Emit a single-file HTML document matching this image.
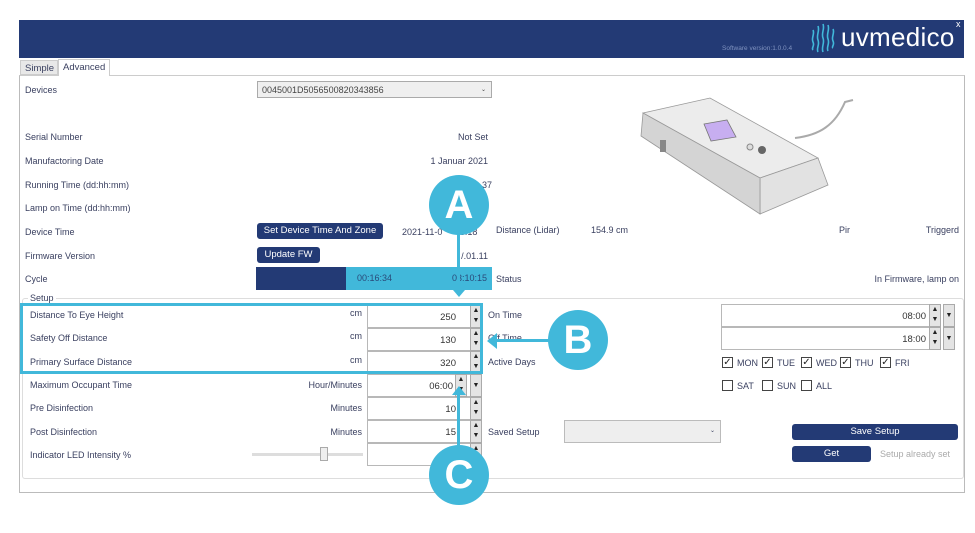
<!DOCTYPE html>
<html><head><meta charset="utf-8"><style>
*{margin:0;padding:0;box-sizing:border-box}
body{width:975px;height:533px;background:#fff;position:relative;overflow:hidden;font-family:"Liberation Sans",sans-serif;font-size:9px;color:#3a4060}
.a{position:absolute;white-space:nowrap}
.r{text-align:right}
.btn{position:absolute;background:#233a75;color:#fff;border-radius:3px;text-align:center;font-size:9.5px}
.inp{position:absolute;background:#fff;border:1px solid #b8b8b8;text-align:right;padding-right:14px;font-size:9.5px;color:#333}
.sp{position:absolute;width:12px;background:#e4e4e4;border:1px solid #aaa;font-size:7px;line-height:10px;text-align:center;color:#222}
.cb{position:absolute;width:11px;height:11px;border:1px solid #444;background:#fff;font-size:10px;line-height:9px;text-align:center;color:#222}
.circ{position:absolute;width:60px;height:60px;border-radius:50%;background:#41b8da;color:#fff;font-size:40px;font-weight:bold;text-align:center;line-height:60px}
</style></head><body>
<div class="a" style="left:19px;top:20px;width:945px;height:38px;background:#233a75"></div>
<div class="a" style="left:722px;top:45px;font-size:6.5px;color:#7f92bf">Software version:1.0.0.4</div>
<svg class="a" style="left:809px;top:22px" width="30" height="32" viewBox="0 0 30 32"><g fill="none" stroke="#41b8da" stroke-width="1.6"><path d="M4 8c2 4-2 8 0 12s-2 6 0 8"/><path d="M9 4c2 5-2 9 0 14s-2 8 0 12"/><path d="M14 2c2 5-2 9 0 14s-2 9 0 14"/><path d="M19 3c2 5-2 9 0 14s-2 8 0 12"/><path d="M24 7c2 4-2 8 0 12s-2 6 0 7"/></g></svg>
<div class="a" style="left:841px;top:22px;font-size:26px;color:#fff;letter-spacing:0.3px">uvmedico</div>
<div class="a" style="left:956px;top:19px;font-size:9px;color:#fff">x</div>
<div class="a" style="left:20px;top:60px;width:38px;height:15px;background:#e8e8e8;border:1px solid #ccc;font-size:9.5px;padding:2px 4px">Simple</div>
<div class="a" style="left:58px;top:59px;width:52px;height:17px;background:#fff;border:1px solid #ccc;border-bottom:none;font-size:9.5px;padding:2px 4px">Advanced</div>
<div class="a" style="left:19px;top:75px;width:946px;height:418px;border:1px solid #bbb;border-top-color:#ccc"></div>
<div class="a" style="left:59px;top:75px;width:50px;height:2px;background:#fff"></div>
<div class="a" style="left:25px;top:85px">Devices</div>
<div class="a" style="left:257px;top:81px;width:235px;height:17px;border:1px solid #aaa;background:#efefef;padding:3px 4px;color:#444">0045001D5056500820343856<span style="position:absolute;right:5px;font-size:6px;top:4px">⌄</span></div>
<div class="a" style="left:25px;top:132px">Serial Number</div><div class="a r" style="right:487px;top:132px">Not Set</div>
<div class="a" style="left:25px;top:156px">Manufactoring Date</div><div class="a r" style="right:487px;top:156px">1 Januar 2021</div>
<div class="a" style="left:25px;top:180px">Running Time (dd:hh:mm)</div><div class="a" style="left:482px;top:180px">37</div>
<div class="a" style="left:25px;top:203px">Lamp on Time (dd:hh:mm)</div>
<div class="a" style="left:25px;top:227px">Device Time</div>
<div class="btn" style="left:257px;top:223px;width:126px;height:16px;line-height:16px">Set Device Time And Zone</div>
<div class="a" style="left:402px;top:227px">2021-11-0&nbsp;&nbsp;&nbsp;&nbsp;&nbsp;&nbsp;&nbsp;5:18</div>
<div class="a" style="left:496px;top:225px">Distance (Lidar)</div><div class="a" style="left:591px;top:225px">154.9 cm</div>
<div class="a" style="left:839px;top:225px">Pir</div><div class="a r" style="right:16px;top:225px">Triggerd</div>
<div class="a" style="left:25px;top:251px">Firmware Version</div>
<div class="btn" style="left:257px;top:247px;width:63px;height:16px;line-height:16px">Update FW</div>
<div class="a r" style="right:487px;top:251px">/.01.11</div>
<div class="a" style="left:25px;top:274px">Cycle</div>
<div class="a" style="left:256px;top:267px;width:90px;height:23px;background:#233a75"></div>
<div class="a" style="left:346px;top:267px;width:146px;height:23px;background:#41b8da"></div>
<div class="a" style="left:357px;top:273px;color:#2a4a7a">00:16:34</div><div class="a" style="left:452px;top:273px;color:#2a4a7a">03:10:15</div>
<div class="a" style="left:496px;top:274px">Status</div><div class="a r" style="right:16px;top:274px">In Firmware, lamp on</div>
<!-- device image -->
<svg class="a" style="left:0;top:0" width="975" height="533" viewBox="0 0 975 533">
<path d="M795 138 C820 135 835 125 845 102 L853 100" stroke="#aaa" stroke-width="2" fill="none"/>
<polygon points="643,113 710,98 818,158 760,178" fill="#ececec" stroke="#999" stroke-width="0.8"/>
<polygon points="760,178 818,158 828,185 760,214" fill="#e2e2e2" stroke="#999" stroke-width="0.8"/>
<polygon points="643,113 760,178 760,214 641,136" fill="#d4d4d4" stroke="#999" stroke-width="0.8"/>
<polygon points="704,124 727,120 736,137 711,141" fill="#c7aef0" stroke="#777" stroke-width="0.8"/>
<circle cx="750" cy="147" r="3" fill="#ddd" stroke="#888"/><circle cx="762" cy="150" r="4" fill="#666"/>
<rect x="660" y="140" width="6" height="12" fill="#888"/>
</svg>
<!-- setup -->
<div class="a" style="left:22px;top:298px;width:942px;height:181px;border:1px solid #ddd;border-radius:3px"></div>
<div class="a" style="left:28px;top:293px;background:#fff;padding:0 2px">Setup</div>
<div class="a" style="left:30px;top:310px">Distance To Eye Height</div><div class="a r" style="right:613px;top:308px">cm</div>
<div class="a" style="left:30px;top:333px">Safety Off Distance</div><div class="a r" style="right:613px;top:331px">cm</div>
<div class="a" style="left:30px;top:357px">Primary Surface Distance</div><div class="a r" style="right:613px;top:355px">cm</div>
<div class="a" style="left:30px;top:380px">Maximum Occupant Time</div><div class="a r" style="right:613px;top:380px">Hour/Minutes</div>
<div class="a" style="left:30px;top:403px">Pre Disinfection</div><div class="a r" style="right:613px;top:403px">Minutes</div>
<div class="a" style="left:30px;top:427px">Post Disinfection</div><div class="a r" style="right:613px;top:427px">Minutes</div>
<div class="a" style="left:30px;top:450px">Indicator LED Intensity %</div>
<div class="a" style="left:252px;top:453px;width:111px;height:3px;background:#ddd"></div>
<div class="a" style="left:320px;top:447px;width:8px;height:14px;background:#eee;border:1px solid #aaa"></div>
<div class="inp" style="left:367px;top:305px;width:104px;height:23px;line-height:23px">250</div><div class="sp" style="left:470px;top:305px;height:23px">▲<br>▼</div>
<div class="inp" style="left:367px;top:328px;width:104px;height:23px;line-height:23px">130</div><div class="sp" style="left:470px;top:328px;height:23px">▲<br>▼</div>
<div class="inp" style="left:367px;top:351px;width:104px;height:23px;line-height:23px">320</div><div class="sp" style="left:470px;top:351px;height:23px">▲<br>▼</div>
<div class="inp" style="left:367px;top:374px;width:104px;height:23px;line-height:23px;padding-right:17px">06:00</div><div class="sp" style="left:455px;top:374px;height:23px">▲<br>▼</div><div class="sp" style="left:470px;top:374px;height:23px;line-height:21px">▼</div>
<div class="inp" style="left:367px;top:397px;width:104px;height:23px;line-height:23px">10</div><div class="sp" style="left:470px;top:397px;height:23px">▲<br>▼</div>
<div class="inp" style="left:367px;top:420px;width:104px;height:23px;line-height:23px">15</div><div class="sp" style="left:470px;top:420px;height:23px">▲<br>▼</div>
<div class="inp" style="left:367px;top:443px;width:104px;height:23px"></div><div class="sp" style="left:470px;top:443px;height:23px">▲<br>▼</div>
<div class="a" style="left:488px;top:310px">On Time</div>
<div class="a" style="left:488px;top:333px">Off Time</div>
<div class="a" style="left:488px;top:357px">Active Days</div>
<div class="a" style="left:488px;top:427px">Saved Setup</div>
<div class="inp" style="left:721px;top:304px;width:210px;height:23px;line-height:23px;padding-right:4px">08:00</div><div class="sp" style="left:929px;top:304px;height:23px">▲<br>▼</div><div class="sp" style="left:943px;top:304px;height:23px;line-height:21px">▼</div>
<div class="inp" style="left:721px;top:327px;width:210px;height:23px;line-height:23px;padding-right:4px">18:00</div><div class="sp" style="left:929px;top:327px;height:23px">▲<br>▼</div><div class="sp" style="left:943px;top:327px;height:23px;line-height:21px">▼</div>
<div class="cb" style="left:722px;top:357px">✓</div><div class="a" style="left:737px;top:358px">MON</div>
<div class="cb" style="left:762px;top:357px">✓</div><div class="a" style="left:777px;top:358px">TUE</div>
<div class="cb" style="left:801px;top:357px">✓</div><div class="a" style="left:816px;top:358px">WED</div>
<div class="cb" style="left:840px;top:357px">✓</div><div class="a" style="left:855px;top:358px">THU</div>
<div class="cb" style="left:880px;top:357px">✓</div><div class="a" style="left:895px;top:358px">FRI</div>
<div class="cb" style="left:722px;top:380px"></div><div class="a" style="left:737px;top:381px">SAT</div>
<div class="cb" style="left:762px;top:380px"></div><div class="a" style="left:777px;top:381px">SUN</div>
<div class="cb" style="left:801px;top:380px"></div><div class="a" style="left:816px;top:381px">ALL</div>
<div class="a" style="left:564px;top:420px;width:157px;height:23px;background:#eee;border:1px solid #bbb"><span style="position:absolute;right:5px;top:6px;font-size:6px">⌄</span></div>
<div class="btn" style="left:792px;top:424px;width:166px;height:16px;line-height:16px">Save Setup</div>
<div class="btn" style="left:792px;top:446px;width:79px;height:16px;line-height:16px">Get</div>
<div class="a" style="left:880px;top:449px;color:#aaa">Setup already set</div>
<!-- callouts -->
<div class="a" style="left:20px;top:303px;width:463px;height:71px;border:3px solid #41b8da"></div>
<div class="a" style="left:457px;top:225px;width:3px;height:70px;background:#41b8da"></div>
<div class="a" style="left:453px;top:290px;width:0;height:0;border-left:6px solid transparent;border-right:6px solid transparent;border-top:7px solid #41b8da"></div>
<div class="circ" style="left:429px;top:175px">A</div>
<div class="a" style="left:495px;top:339px;width:60px;height:3px;background:#41b8da"></div>
<div class="a" style="left:487px;top:333px;width:0;height:0;border-top:8px solid transparent;border-bottom:8px solid transparent;border-right:10px solid #41b8da"></div>
<div class="circ" style="left:548px;top:310px">B</div>
<div class="a" style="left:457px;top:395px;width:3px;height:65px;background:#41b8da"></div>
<div class="a" style="left:452px;top:386px;width:0;height:0;border-left:7px solid transparent;border-right:7px solid transparent;border-bottom:9px solid #41b8da"></div>
<div class="circ" style="left:429px;top:445px">C</div>
</body></html>
